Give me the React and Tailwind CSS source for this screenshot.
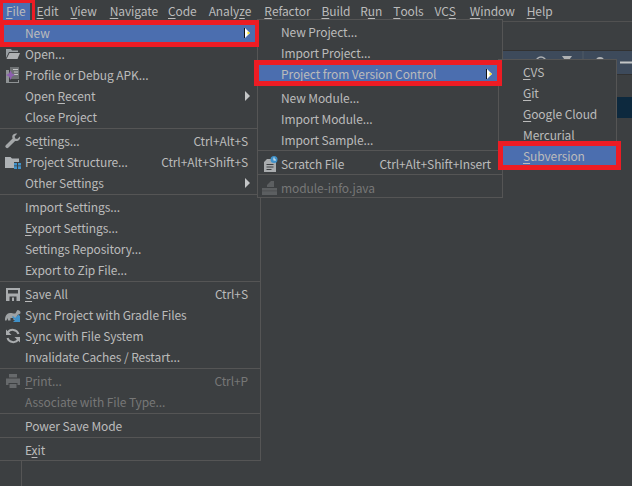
import React from "react";

const font = { fontFamily: '"Noto Sans CJK KR","Noto Sans",sans-serif' };

function M({ text, m }) {
  if (!m) return text;
  const i = text.indexOf(m);
  return (
    <>
      {text.slice(0, i)}
      <u className="underline underline-offset-2">{m}</u>
      {text.slice(i + m.length)}
    </>
  );
}

const Icon = ({ children, dim }) => (
  <svg width="16" height="16" viewBox="0 0 16 16" className={dim ? "opacity-40" : ""}>
    {children}
  </svg>
);

const icons = {
  open: (
    <Icon>
      <path d="M1 3h5l1 1.500h6v1.500H4L1 12z" fill="#9aa0a4" />
      <path d="M4.500 7H15l-2.500 6H1.500z" fill="#afb1b3" />
    </Icon>
  ),
  apk: (
    <Icon>
      <path d="M1 3h3v12h9v-2h1v3H1z" fill="#8f9395" />
      <path d="M5 0h9v12H5z" fill="#6e7173" />
      <path d="M8 2h5v1H8zM9 4.500h4v1H9zM9 7h4v1H9z" fill="#c4c6c7" />
      <path d="M1 8l3-1.500L5.500 3.500 7 6.500l3 1.500-3 1.500L5.500 13 4 9.500z" fill="#8d5fb0" />
    </Icon>
  ),
  wrench: (
    <Icon>
      <path d="M15 3.500l-2.800 2.500-2-.6-.6-2L12.300.6C10 0 7.800 1 7.300 3c-.2 1 0 1.800.3 2.500L1 12c-1 1-.8 2-.1 2.600.7.700 1.700.8 2.600-.1l6.600-6.600c2.800.8 5.900-1.500 4.900-4.400z" fill="#a4a7a9" />
    </Icon>
  ),
  structure: (
    <Icon>
      <path d="M0 3h5.500l1.500 1.500h7V8H9v6H0z" fill="#aeb2b5" />
      <path d="M9 9h3v2.500H9zM13 9h3v2.500h-3zM9 12.300h3V15H9zM13 12.300h3V15h-3z" fill="#3f91c9" />
    </Icon>
  ),
  save: (
    <Icon>
      <path d="M1 2h14v13H1z" fill="#a9acae" />
      <path d="M3 4h10v3.500H3z" fill="#3c3f41" />
      <path d="M4.500 10.500h7V15h-7z" fill="#3c3f41" />
      <path d="M7 11.500h2V15H7z" fill="#a9acae" />
    </Icon>
  ),
  gradle: (
    <Icon>
      <path d="M0 13c0-4 2-7 5-7 2 0 3 .5 5 .5 1 0 1-2 2.500-3.500 1.500 0 3 1 3 2.500 0 1.500-1.500 2-2.500 2-1 2-2 3-2 5.500H8.500V11h-3v2.500H3L2.500 11 1.500 13.500H0z" fill="#9ea2a4" />
      <path d="M8 9l2 2 3.500-3.500 1.500 1.500v-1 7h-7l2-2-3-3z" fill="#3f91c9" />
    </Icon>
  ),
  sync: (
    <Icon>
      <path d="M13.500 6A6 6 0 0 0 2.700 4.700" fill="none" stroke="#a9acae" strokeWidth="2" />
      <path d="M2.500 10a6 6 0 0 0 10.800 1.300" fill="none" stroke="#a9acae" strokeWidth="2" />
      <path d="M1 1.500v5.500h5.500zM15 14.500V9H9.500z" fill="#a9acae" />
    </Icon>
  ),
  print: (
    <Icon>
      <path d="M4 1h8v3.500H4zM1 5.500h14V12h-2.500v-2h-9v2H1zM4.500 11h7v4h-7z" fill="#66696b" />
    </Icon>
  ),
  scratch: (
    <Icon>
      <path d="M5 3h6v2h3v11H2V6z" fill="#a9acae" />
      <path d="M4.500 8h7v1h-7zM4.500 10.500h7v1h-7zM4.500 13h5v1h-5z" fill="#3c3f41" />
      <circle cx="12" cy="3.500" r="3.500" fill="#3f91c9" />
      <path d="M11.500 1.500h1V3.500h1.500v1h-2.500z" fill="#e8eef2" />
    </Icon>
  ),
  module: (
    <Icon>
      <path d="M5 5l4-4h3v6H5zM0 8h15v7H0z" fill="#5c5f61" />
      <path d="M0 10.500h15v.8H0z" fill="#4a4d4f" />
    </Icon>
  ),
};

const Arrow = ({ active, className }) =>
  active ? (
    <svg width="6" height="10" viewBox="0 0 6 10" className={`shrink-0 ${className}`}>
      <path d="M1 0l5 5-5 5z" fill="#ffffff" />
      <path d="M3.500 3.500L6 5 3.500 6.500z" fill="#ffe600" />
      <path d="M0 0h1v10H0z" fill="#111111" />
    </svg>
  ) : (
    <svg width="6" height="10" viewBox="0 0 6 10" className={`shrink-0 ${className}`}>
      <path d="M1 0l5 5-5 5z" fill="#c4c6c7" />
    </svg>
  );

function Row({ text, m, icon, sc, arrow, active, disabled, left, right, arrowClass, rowClass }) {
  return (
    <div
      className={`flex items-center h-[21px] shrink-0 whitespace-nowrap ${rowClass} ${
        active ? "bg-[#4b6eaf]" : ""
      } ${disabled ? "text-[#777777]" : "text-[#bbbbbb]"}`}
    >
      <span className={`flex items-center justify-center shrink-0 ${left}`}>{icon && icons[icon]}</span>
      <span className="flex-1">
        <M text={text} m={m} />
      </span>
      {sc && <span>{sc}</span>}
      {arrow && <Arrow active={active} className={arrowClass} />}
      <span className={`shrink-0 ${right}`} />
    </div>
  );
}

const Sep = () => <div className="h-[3px] shrink-0 border-t border-[#555555]" />;

const fileMenu = [
  [
    { text: "New", active: true, arrow: true },
    { text: "Open...", icon: "open" },
    { text: "Profile or Debug APK...", icon: "apk" },
    { text: "Open Recent", m: "R", arrow: true },
    { text: "Close Project", m: "j" },
  ],
  [
    { text: "Settings...", m: "t", icon: "wrench", sc: "Ctrl+Alt+S" },
    { text: "Project Structure...", icon: "structure", sc: "Ctrl+Alt+Shift+S" },
    { text: "Other Settings", arrow: true },
  ],
  [
    { text: "Import Settings..." },
    { text: "Export Settings...", m: "E" },
    { text: "Settings Repository..." },
    { text: "Export to Zip File..." },
  ],
  [
    { text: "Save All", m: "S", icon: "save", sc: "Ctrl+S" },
    { text: "Sync Project with Gradle Files", icon: "gradle" },
    { text: "Sync with File System", m: "y", icon: "sync" },
    { text: "Invalidate Caches / Restart..." },
  ],
  [
    { text: "Print...", m: "P", icon: "print", sc: "Ctrl+P", disabled: true },
    { text: "Associate with File Type...", disabled: true },
  ],
  [{ text: "Power Save Mode" }],
  [{ text: "Exit", m: "x" }],
];

const newMenu = [
  [
    { text: "New Project..." },
    { text: "Import Project..." },
    { text: "Project from Version Control", active: true, arrow: true },
  ],
  [{ text: "New Module..." }, { text: "Import Module..." }, { text: "Import Sample..." }],
  [{ text: "Scratch File", icon: "scratch", sc: "Ctrl+Alt+Shift+Insert" }],
  [{ text: "module-info.java", icon: "module", disabled: true }],
];

const vcsMenu = [
  [
    { text: "CVS", m: "C" },
    { text: "Git", m: "G" },
    { text: "Google Cloud", m: "G" },
    { text: "Mercurial", m: "M" },
    { text: "Subversion", m: "S", active: true },
  ],
];

function Menu({ groups, className, ...rowProps }) {
  return (
    <div className={`absolute flex flex-col overflow-hidden bg-[#3c3f41] border border-[#555555] ${className}`}>
      {groups.map((g, i) => (
        <React.Fragment key={i}>
          {i > 0 && <Sep />}
          {g.map((r) => (
            <Row key={r.text} {...r} {...rowProps} />
          ))}
        </React.Fragment>
      ))}
    </div>
  );
}

const bar = [
  ["File", "F", "ml-[2px] pl-[4px] pr-[4px] bg-[#4b6eaf]"],
  ["Edit", "E", "ml-[7px]"],
  ["View", "V", "ml-[12px]"],
  ["Navigate", "N", "ml-[13px]"],
  ["Code", "C", "ml-[10px]"],
  ["Analyze", "z", "ml-[12px]"],
  ["Refactor", "R", "ml-[13px]"],
  ["Build", "B", "ml-[11px]"],
  ["Run", "u", "ml-[10px]"],
  ["Tools", "T", "ml-[11px]"],
  ["VCS", "S", "ml-[11px]"],
  ["Window", "W", "ml-[14px]"],
  ["Help", "H", "ml-[12px]"],
];

const Red = ({ className }) => <div className={`absolute border-[#ed1c24] ${className}`} />;

export default function App() {
  return (
    <div
      className="relative w-[632px] h-[486px] overflow-hidden bg-[#3c3f41] text-[12px] tracking-[-0.1px] leading-none flex flex-col"
      style={font}
    >
      <div className="h-[22px] shrink-0 flex items-stretch border-b border-[#515151] text-[#bbbbbb]">
        {bar.map(([t, m, c]) => (
          <span key={t} className={`flex items-center ${c}`}>
            <M text={t} m={m} />
          </span>
        ))}
      </div>
      <div className="h-[29px] shrink-0 border-b border-[#323232]" />
      <div className="flex-1 flex min-h-0">
        <div className="w-[22px] shrink-0 border-r border-[#555555]" />
        <div className="flex-1" />
        <div className="w-[130px] shrink-0 flex flex-col">
          <div className="h-[24px] shrink-0 flex items-start bg-[#3d4a5b] border-b border-[#323232] relative">
            <svg width="130" height="24" viewBox="0 0 130 24">
              <circle cx="39" cy="11" r="5" fill="none" stroke="#afb1b3" strokeWidth="1.500" />
              <path d="M60 5h10l-5 7z" fill="#afb1b3" />
              <path d="M81 0v24" stroke="#505a66" />
              <circle cx="98" cy="10" r="4" fill="#afb1b3" />
              <path d="M118 11.500h12" stroke="#c4c6c7" strokeWidth="2" />
            </svg>
          </div>
          <div className="h-[22px] shrink-0" />
          <div className="h-[21px] shrink-0 bg-[#0d293e]" />
        </div>
      </div>

      <Menu
        groups={fileMenu}
        className="left-[-1px] top-[21px] w-[262px] h-[440px] pt-px"
        left="w-[25px]"
        right="w-[12px]"
        arrowClass="-mr-[2px]"
        rowClass="pb-[2px]"
      />
      <Menu
        groups={newMenu}
        className="left-[257px] top-[19px] w-[246px] h-[179px] pt-px"
        left="w-[23px]"
        right="w-[11px]"
        arrowClass="-mr-px"
        rowClass=""
      />
      <Menu
        groups={vcsMenu}
        className="left-[498px] top-[59px] w-[119px] pt-px"
        left="w-[24px]"
        right="w-[4px]"
        arrowClass=""
        rowClass=""
      />

      <Red className="left-0 top-0 w-[35px] h-[24px] border-[3px] border-b-0" />
      <Red className="left-0 top-[20px] w-[259px] h-[27px] border-x-[4px] border-t-[5px] border-b-[5px]" />
      <Red className="left-[254px] top-[60px] w-[248px] h-[26px] border-[5px]" />
      <Red className="left-[498px] top-[141px] w-[123px] h-[29px] border-[5px]" />
    </div>
  );
}
